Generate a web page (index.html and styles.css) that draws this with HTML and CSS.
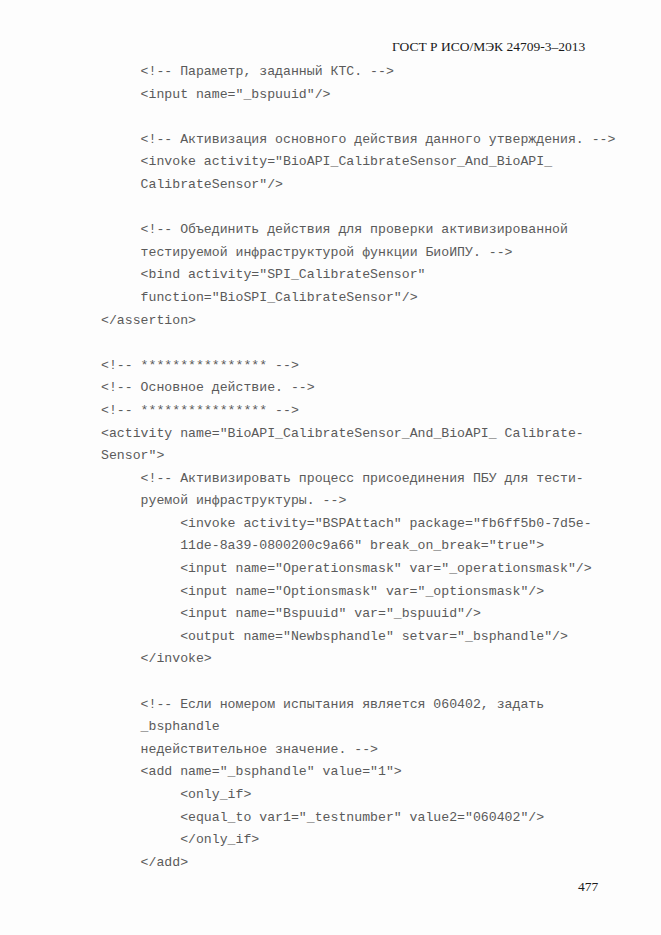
FILE: index.html
```html
<!DOCTYPE html>
<html lang="ru">
<head>
<meta charset="utf-8">
<title>ГОСТ Р ИСО/МЭК 24709-3–2013</title>
<link rel="stylesheet" href="styles.css">
</head>
<body>
<div class="page">
  <header class="head">ГОСТ Р ИСО/МЭК 24709-3–2013</header>
  <div class="code">
<div class="l1">&lt;!-- Параметр, заданный КТС. --&gt;</div>
<div class="l1">&lt;input name="_bspuuid"/&gt;</div>
<div class="blank"></div>
<div class="l1">&lt;!-- Активизация основного действия данного утверждения. --&gt;</div>
<div class="l1">&lt;invoke activity="BioAPI_CalibrateSensor_And_BioAPI_</div>
<div class="l1">CalibrateSensor"/&gt;</div>
<div class="blank"></div>
<div class="l1">&lt;!-- Объединить действия для проверки активизированной</div>
<div class="l1">тестируемой инфраструктурой функции БиоИПУ. --&gt;</div>
<div class="l1">&lt;bind activity="SPI_CalibrateSensor"</div>
<div class="l1">function="BioSPI_CalibrateSensor"/&gt;</div>
<div class="l0">&lt;/assertion&gt;</div>
<div class="blank"></div>
<div class="l0">&lt;!-- **************** --&gt;</div>
<div class="l0">&lt;!-- Основное действие. --&gt;</div>
<div class="l0">&lt;!-- **************** --&gt;</div>
<div class="l0">&lt;activity name="BioAPI_CalibrateSensor_And_BioAPI_ Calibrate-</div>
<div class="l0">Sensor"&gt;</div>
<div class="l1">&lt;!-- Активизировать процесс присоединения ПБУ для тести-</div>
<div class="l1">руемой инфраструктуры. --&gt;</div>
<div class="l2">&lt;invoke activity="BSPAttach" package="fb6ff5b0-7d5e-</div>
<div class="l2">11de-8a39-0800200c9a66" break_on_break="true"&gt;</div>
<div class="l2">&lt;input name="Operationsmask" var="_operationsmask"/&gt;</div>
<div class="l2">&lt;input name="Optionsmask" var="_optionsmask"/&gt;</div>
<div class="l2">&lt;input name="Bspuuid" var="_bspuuid"/&gt;</div>
<div class="l2">&lt;output name="Newbsphandle" setvar="_bsphandle"/&gt;</div>
<div class="l1">&lt;/invoke&gt;</div>
<div class="blank"></div>
<div class="l1">&lt;!-- Если номером испытания является 060402, задать</div>
<div class="l1">_bsphandle</div>
<div class="l1">недействительное значение. --&gt;</div>
<div class="l1">&lt;add name="_bsphandle" value="1"&gt;</div>
<div class="l2">&lt;only_if&gt;</div>
<div class="l2">&lt;equal_to var1="_testnumber" value2="060402"/&gt;</div>
<div class="l2">&lt;/only_if&gt;</div>
<div class="l1">&lt;/add&gt;</div>
  </div>
  <footer class="pagenum">477</footer>
</div>
</body>
</html>
```
FILE: styles.css
```css
html, body {
  margin: 0;
  padding: 0;
  background: #fdfdfd;
}
.page {
  width: 661px;
  height: 935px;
  box-sizing: border-box;
  padding: 38px 0 0 101px;
}
.head {
  font-family: "Liberation Serif", "Times New Roman", serif;
  font-size: 13.5px;
  line-height: 18px;
  color: #1a1a1a;
  padding-left: 291px;
  height: 23px;
}
.code {
  font-family: "Liberation Mono", "Courier New", monospace;
  font-size: 13.2px;
  line-height: 22.6px;
  color: #5a5a5a;
}
.code > div {
  height: 22.6px;
  white-space: pre;
}
.l0 { padding-left: 0; }
.l1 { padding-left: 5ch; }
.l2 { padding-left: 10ch; }
.pagenum {
  font-family: "Liberation Serif", "Times New Roman", serif;
  font-size: 13.5px;
  line-height: 18px;
  color: #1a1a1a;
  padding-left: 477px;
  margin-top: 4px;
}
```
